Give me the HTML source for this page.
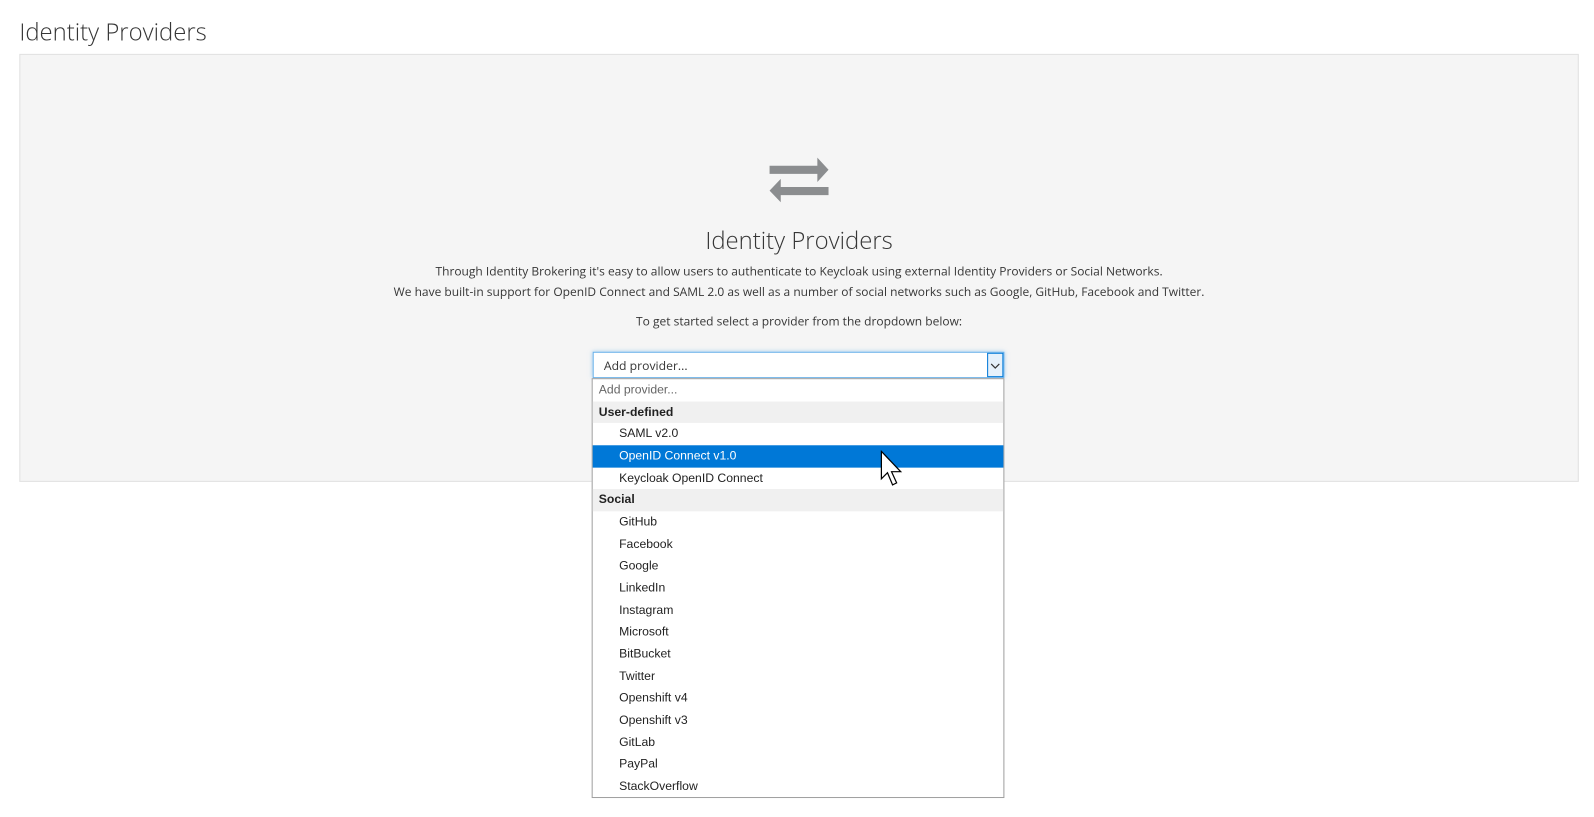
<!DOCTYPE html>
<html><head><style>
body{margin:0;background:#fff;font-family:"Open Sans","Liberation Sans",sans-serif;width:1594px;height:804px;position:relative;overflow:hidden}
.w{position:absolute;left:0;top:0;width:1594px;height:804px;transform:scale(1.0166);transform-origin:0 0}
h1{position:absolute;left:19px;top:15px;margin:0;font-weight:300;font-size:23.5px;color:#363636}
.panel{position:absolute;left:19px;top:53px;width:1534px;height:421px;background:#f5f5f5;border:1px solid #e1e1e1;box-sizing:border-box}
.t{position:absolute;left:0;width:1572px;text-align:center;color:#363636;font-size:11.8px}
.sel{position:absolute;left:583px;top:346px;width:405px;height:26px;box-sizing:border-box;border:1px solid #66afe9;background:#fff;box-shadow:0 0 4px rgba(102,175,233,.6);font-size:12px;color:#363636;padding:4px 10px}
.btn{position:absolute;right:0;top:0;width:16px;height:24px;border:1px solid #0078d7;box-sizing:border-box;background:#e5f1fb}
.list{position:absolute;left:582px;top:372px;width:406px;height:413px;box-sizing:border-box;border:1px solid #a0a0a0;background:#fff;font-family:"Liberation Sans",sans-serif;font-size:12px;color:#222}
.r{height:21.67px;line-height:21px;padding-left:26px;white-space:nowrap}
.g{background:#f0f0f0;font-weight:bold;padding-left:6px}
.h{background:#0078d7;color:#fff}
</style></head><body><div class="w">
<h1>Identity Providers</h1>
<div class="panel"></div>
<svg style="position:absolute;left:750px;top:150px" width="80" height="55" viewBox="750 150 80 55">
<path d="M757 163H804V155L815 167L804 179V171H757Z" fill="#8b8d8f"/>
<path d="M815 184H768V176L757 187.5L768 199V192H815Z" fill="#8b8d8f"/>
</svg>
<div class="t" style="top:220px;font-size:23.5px;font-weight:300">Identity Providers</div>
<div class="t" style="top:259px">Through Identity Brokering it's easy to allow users to authenticate to Keycloak using external Identity Providers or Social Networks.</div>
<div class="t" style="top:279px">We have built-in support for OpenID Connect and SAML 2.0 as well as a number of social networks such as Google, GitHub, Facebook and Twitter.</div>
<div class="t" style="top:308px">To get started select a provider from the dropdown below:</div>
<div class="sel">Add provider...<div class="btn"><svg width="14" height="22" viewBox="0 0 14 22"><path d="M3 10l4 4 4-4" stroke="#333" fill="none" stroke-width="1.2"/></svg></div></div>
<div class="list">
<div class="r" style="padding-left:6px;color:#666">Add provider...</div>
<div class="r g">User-defined</div>
<div class="r">SAML v2.0</div>
<div class="r h">OpenID Connect v1.0</div>
<div class="r">Keycloak OpenID Connect</div>
<div class="r g">Social</div>
<div class="r">GitHub</div><div class="r">Facebook</div><div class="r">Google</div><div class="r">LinkedIn</div><div class="r">Instagram</div><div class="r">Microsoft</div><div class="r">BitBucket</div><div class="r">Twitter</div><div class="r">Openshift v4</div><div class="r">Openshift v3</div><div class="r">GitLab</div><div class="r">PayPal</div><div class="r">StackOverflow</div>
</div>
<svg style="position:absolute;left:866px;top:443px" width="26" height="40" viewBox="0 0 26 40"><path d="M1 1V28L7 22L12 34L16 32L11 21H20Z" fill="#fff" stroke="#000" stroke-width="1.2"/></svg>
</div></body></html>
